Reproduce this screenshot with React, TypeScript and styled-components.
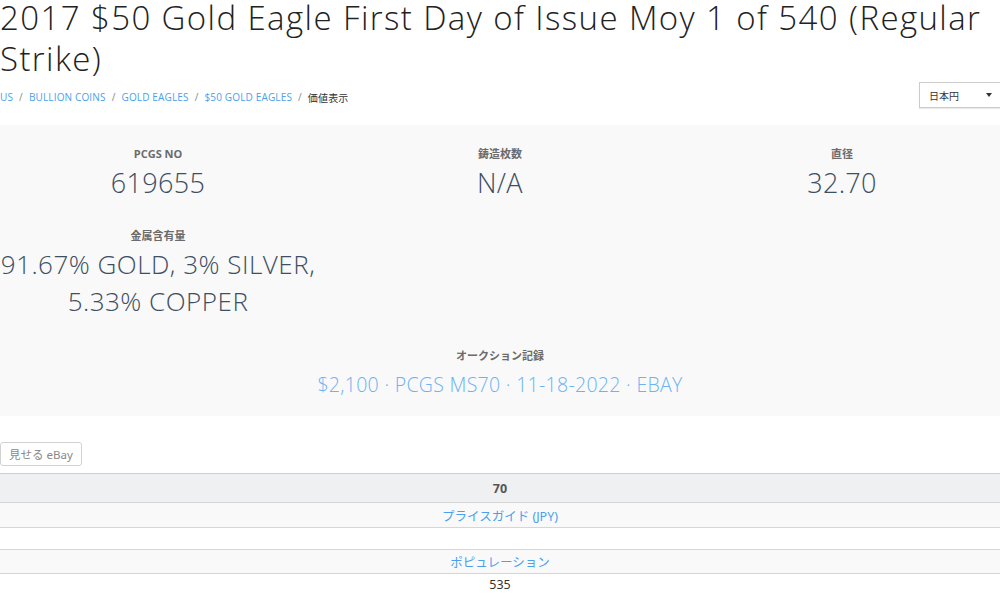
import React from 'react';
import styled, {createGlobalStyle} from 'styled-components';

const GlobalStyle = createGlobalStyle`
  html, body {
    margin: 0;
    padding: 0;
    background: #fff;
    overflow: hidden;
  }
  body {
    font-family: "Open Sans", "Noto Sans CJK JP", sans-serif;
    color: #333;
  }
`;

const Page = styled.div`
  width: 1026px;
  margin-left: -13px;
`;

const Head = styled.div`
  padding: 0 13px;
`;

const Title = styled.h1`
  margin: 0;
  padding-right: 13px;
  font-size: 33px;
  line-height: 41px;
  font-weight: 300;
  color: #222;
  letter-spacing: 1.4px;
  position: relative;
  top: -3px;
  margin-bottom: -3px;
`;

const CrumbRow = styled.div`
  display: flex;
  align-items: center;
  justify-content: space-between;
  margin-top: 3px;
  height: 26px;
`;

const Crumbs = styled.div`
  display: flex;
  align-items: center;
  gap: 6px;
  font-size: 10px;
  letter-spacing: 0.15px;
  text-transform: uppercase;
  padding-top: 4px;
`;

const Crumb = styled.a<{ $current?: boolean }>`
  color: ${p => (p.$current ? '#333' : '#4a9fee')};
  text-decoration: none;
`;

const Sep = styled.span`
  color: #888;
`;

const Select = styled.div`
  width: 84px;
  height: 26px;
  box-sizing: border-box;
  border: 1px solid #ccc;
  margin-right: -3px;
  display: flex;
  align-items: center;
  justify-content: space-between;
  padding: 0 10px 0 9px;
  font-size: 10px;
  color: #333;
  box-shadow: 0 1px 1px rgba(0, 0, 0, 0.08);
  font-family: "Noto Sans CJK JP", sans-serif;
`;

const Caret = styled.span`
  width: 0;
  height: 0;
  border-left: 3px solid transparent;
  border-right: 3px solid transparent;
  border-top: 4px solid #333;
`;

const Panel = styled.div`
  margin-top: 17px;
  background: #f9f9f9;
  padding: 21px 0 13px;
  display: grid;
  grid-template-columns: repeat(3, 342px);
`;

const Stat = styled.div<{ $wide?: boolean; $gap?: number }>`
  grid-column: ${p => (p.$wide ? '1 / span 3' : 'auto')};
  margin-top: ${p => p.$gap ?? 0}px;
  text-align: center;
  padding: 0 10px;
`;

const Label = styled.div`
  font-size: 11px;
  font-weight: 700;
  color: #6b6b6b;
  line-height: 16px;
  font-family: "Open Sans", "Noto Sans CJK JP", sans-serif;
`;

const Value = styled.div<{ $link?: boolean; $size?: number; $track?: number }>`
  font-size: ${p => p.$size ?? 27}px;
  line-height: 37px;
  font-weight: 300;
  letter-spacing: ${p => p.$track ?? 0.3}px;
  color: ${p => (p.$link ? '#6cb2f4' : '#3e4f63')};
  margin-top: 2px;
`;

const Spacer = styled.div``;

const EbayButton = styled.button`
  margin: 26px 0 0 13px;
  height: 24px;
  padding: 0 8px;
  background: #fff;
  border: 1px solid #d2d2d2;
  border-radius: 3px;
  color: #888;
  font-size: 11.5px;
  font-family: "Noto Sans", "Noto Sans CJK JP", sans-serif;
`;

const Table = styled.table`
  margin-top: 7px;
  width: 100%;
  border-collapse: collapse;
  font-family: "Noto Sans", "Noto Sans CJK JP", sans-serif;
  font-size: 12.5px;
`;

const Cell = styled.td<{ $bg?: string; $h: number; $head?: boolean; $link?: boolean }>`
  background: ${p => p.$bg ?? '#fff'};
  height: ${p => p.$h}px;
  padding: 0;
  text-align: center;
  border-top: 1px solid ${p => (p.$head ? '#cfcfcf' : '#d6d6d6')};
  font-weight: ${p => (p.$head ? 700 : 400)};
  color: ${p => (p.$head ? '#555' : p.$link ? '#4a9fee' : '#333')};
`;

export default function App() {
  return (
    <>
      <GlobalStyle/>
      <Page>
        <Head>
          <Title>2017 $50 Gold Eagle First Day of Issue Moy 1 of 540 (Regular Strike)</Title>
          <CrumbRow>
            <Crumbs>
              <Crumb href="#">US</Crumb><Sep>/</Sep>
              <Crumb href="#">Bullion Coins</Crumb><Sep>/</Sep>
              <Crumb href="#">Gold Eagles</Crumb><Sep>/</Sep>
              <Crumb href="#">$50 Gold Eagles</Crumb><Sep>/</Sep>
              <Crumb $current>価値表示</Crumb>
            </Crumbs>
            <Select>日本円<Caret/></Select>
          </CrumbRow>
        </Head>

        <Panel>
          <Stat>
            <Label>PCGS NO</Label>
            <Value>619655</Value>
          </Stat>
          <Stat>
            <Label>鋳造枚数</Label>
            <Value>N/A</Value>
          </Stat>
          <Stat>
            <Label>直径</Label>
            <Value>32.70</Value>
          </Stat>
          <Stat $gap={27}>
            <Label>金属含有量</Label>
            <Value $size={26} $track={0.5}>91.67% GOLD, 3% SILVER, 5.33% COPPER</Value>
          </Stat>
          <Spacer/>
          <Spacer/>
          <Stat $wide $gap={28}>
            <Label>オークション記録</Label>
            <Value $link $size={19.5}>$2,100 · PCGS MS70 · 11-18-2022 · EBAY</Value>
          </Stat>
        </Panel>

        <EbayButton>見せる eBay</EbayButton>

        <Table>
          <tbody>
            <tr><Cell $head $bg="#eff0f2" $h={28}>70</Cell></tr>
            <tr><Cell $link $bg="#f9f9f9" $h={24}>プライスガイド (JPY)</Cell></tr>
            <tr><Cell $h={21}></Cell></tr>
            <tr><Cell $link $bg="#f9f9f9" $h={23}>ポピュレーション</Cell></tr>
            <tr><Cell $h={20}>535</Cell></tr>
          </tbody>
        </Table>
      </Page>
    </>
  );
}
